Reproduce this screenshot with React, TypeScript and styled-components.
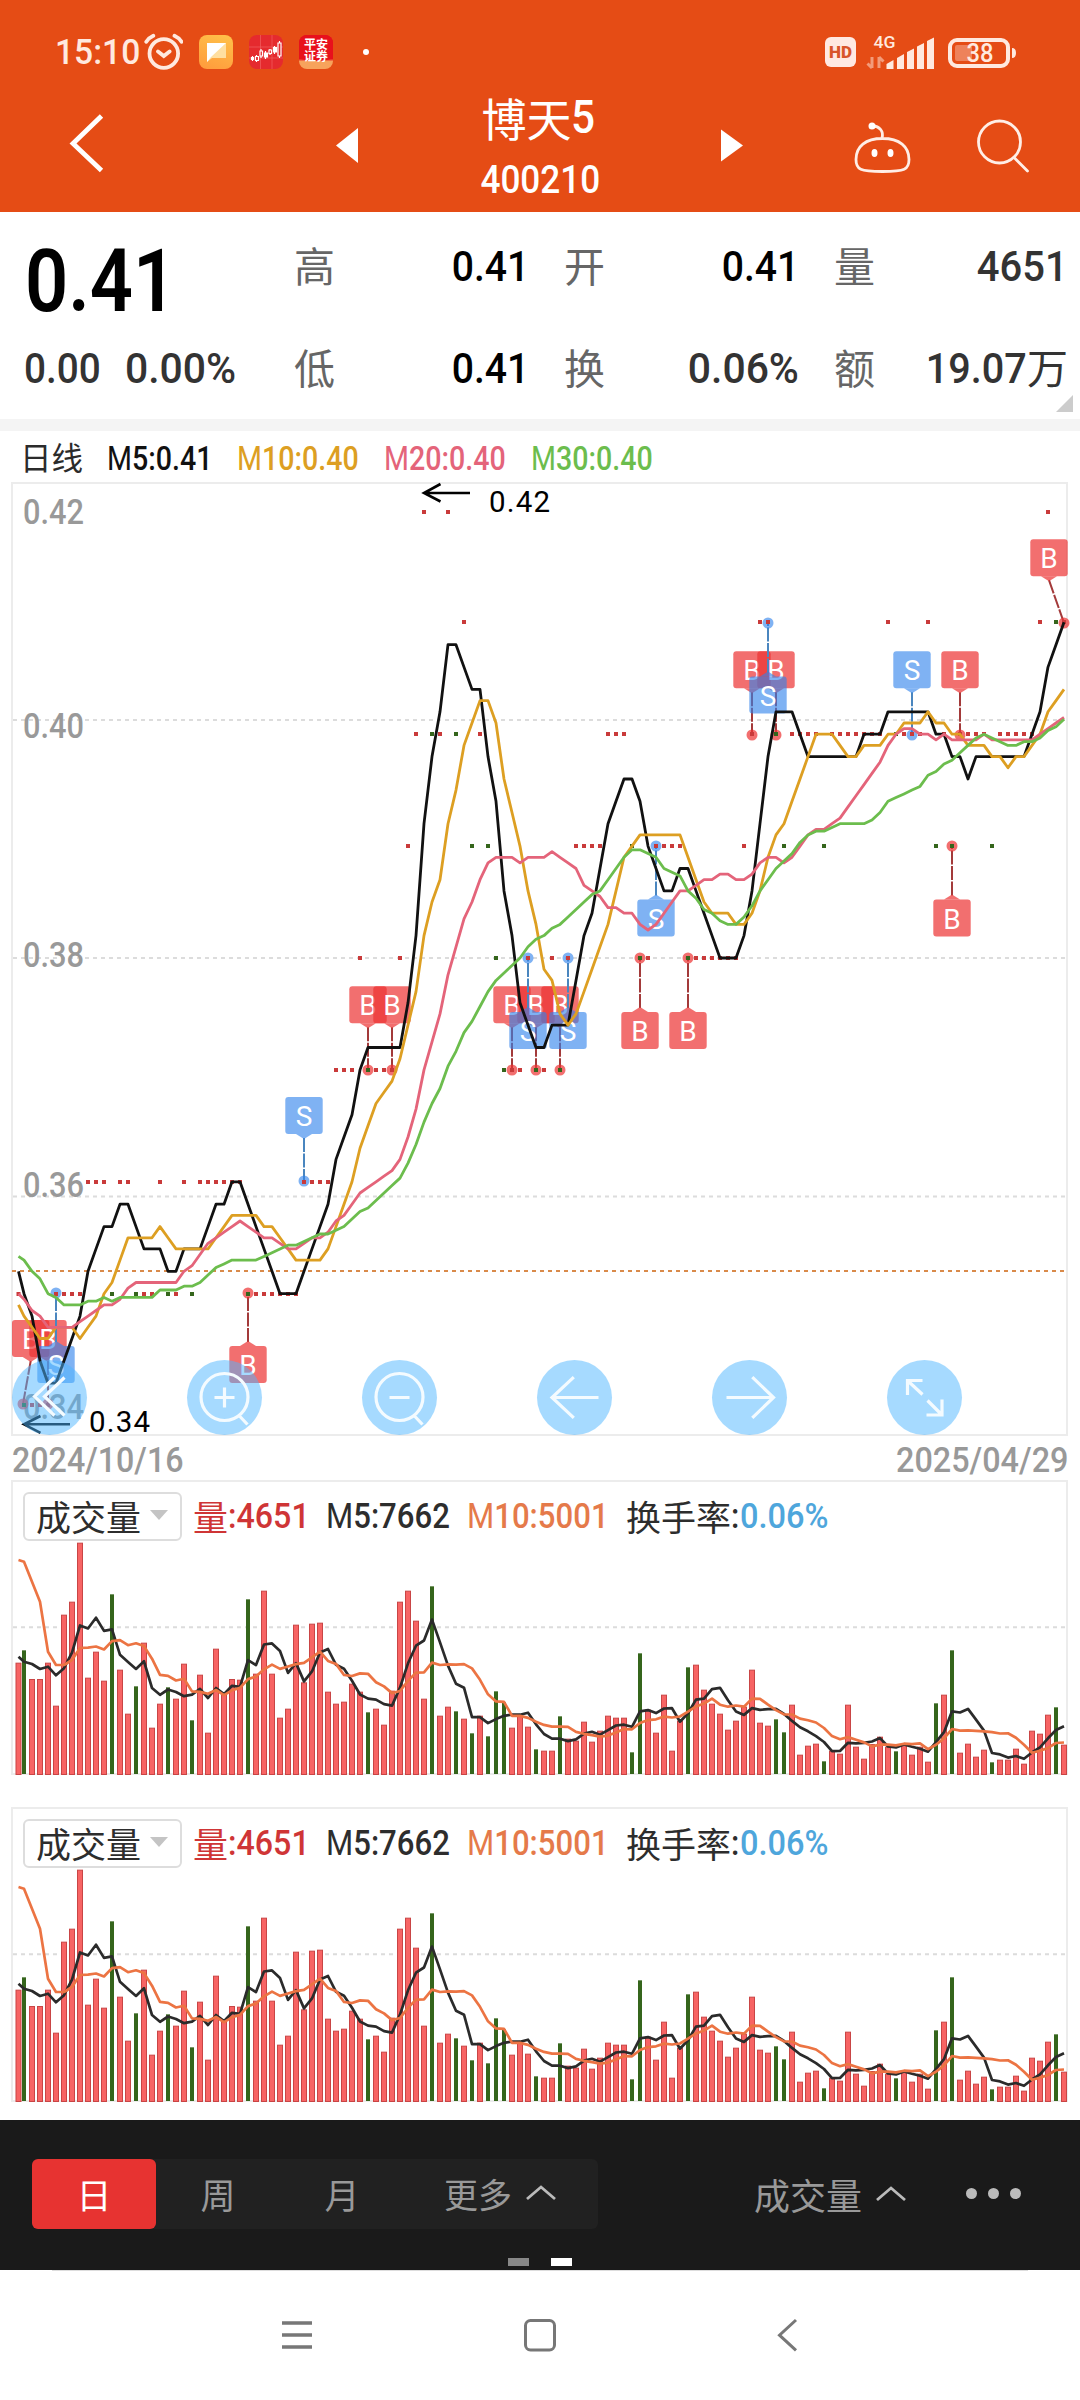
import React from 'react';
import styled, { createGlobalStyle } from 'styled-components';

const GlobalStyle = createGlobalStyle`
  body { margin: 0; background: #fff; }
  * { box-sizing: border-box; }
`;

const CJK = `'Noto Sans CJK SC', sans-serif`;
const NUM = `Roboto, 'Noto Sans CJK SC', sans-serif`;

/* ---------- data ---------- */

// closes in ticks of 0.01 above 0.34; the last 132 are plotted
const HISTORY = [1, 3, 2, 4, 2, 3, 1, 1, 1, 2, 1, 2, 1, 2, 1, 1, 1, 0, 1, 1, 1, 1, 1, 0, 0, 1, 1, 2, 1];
const CLOSES = [
  1, 0, 0, 0, 0, 1, 1, 1, 1, 2, 2, 2, 1, 2, 2, 1, 1, 1, 2, 1, 1, 2, 1, 2, 2, 2, 2, 2, 2, 1,
  1, 1, 1, 1, 1, 1, 2, 2, 2, 2, 3, 3, 3, 4, 3, 3, 3, 3, 4, 5, 6, 8, 6, 6, 8, 6, 7, 5, 6, 5,
  4, 3, 3, 3, 4, 3, 3, 4, 3, 4, 5, 5, 5, 5, 6, 6, 6, 5, 4, 4, 5, 5, 5, 5, 4, 4, 4, 4, 4, 4,
  4, 5, 6, 7, 7, 6, 5, 6, 6, 6, 6, 5, 6, 6, 6, 6, 6, 6, 6, 7, 6, 6, 6, 6, 7, 5, 6, 5, 6, 6,
  6, 6, 5, 6, 6, 6, 6, 6, 7, 8, 7, 7,
];
const ROW_Y = [1405, 1294, 1182, 1070, 958, 846, 734, 622, 512];

// distance of each bar's top from the panel top, in thirds of a pixel
const BARS = [
  578, 541, 627, 627, 578, 707, 434, 395, 218, 623, 545, 632, 373, 599, 731, 649, 518, 773, 701, 652,
  686, 581, 751, 614, 788, 536, 672, 627, 629, 388, 611, 362, 611, 743, 716, 464, 637, 461, 458, 665,
  701, 695, 641, 665, 727, 716, 764, 662, 395, 362, 452, 686, 349, 737, 710, 724, 746, 790, 737, 799,
  664, 697, 773, 737, 770, 838, 842, 842, 739, 806, 812, 755, 815, 782, 737, 743, 743, 847, 550, 719,
  788, 674, 842, 752, 592, 584, 659, 701, 731, 779, 752, 710, 599, 758, 767, 748, 787, 704, 854, 827,
  821, 874, 842, 851, 704, 830, 866, 822, 800, 830, 844, 822, 854, 830, 875, 700, 674, 541, 848, 821,
  860, 839, 877, 869, 869, 836, 881, 782, 791, 734, 712, 824,
];
const FALLING = new Set([
  1, 12, 15, 19, 22, 29, 44, 52, 55, 57, 59, 60, 61, 65, 68, 77, 78, 84, 95, 96, 101, 110, 115, 117, 122, 130,
]);
const VOL_M5_LEAD = [560, 575, 582, 597];
const VOL_M10_LEAD = [270, 275, 335, 395, 545, 585, 585, 570, 534];

const barX = (i: number) => (i === 0 ? 18.5 : 16 + 8 * i);
const priceY = (n: number) => 1405.6 - 111.9 * n;
const volY = (v: number) => 1470 + v / 3;

const priceAverage = (span: number) => {
  const all = [...HISTORY, ...CLOSES];
  return CLOSES.map((_, i) => {
    const end = i + HISTORY.length + 1;
    const sum = all.slice(end - span, end).reduce((a, b) => a + b, 0);
    return `${barX(i)},${priceY(sum / span).toFixed(1)}`;
  }).join(' ');
};

const volumeAverage = (span: number, lead: number[]) =>
  BARS.map((_, i) => {
    const v = i < lead.length ? lead[i] : BARS.slice(i - span + 1, i + 1).reduce((a, b) => a + b, 0) / span;
    return `${barX(i)},${volY(v).toFixed(1)}`;
  }).join(' ');

type Mark = { t: 'B' | 'S'; x: number; y: number; ax: number; ay: number };
const mark = (t: 'B' | 'S', x: number, y: number, ay: number, ax = x): Mark => ({ t, x, y, ax, ay });
const MARKS: Mark[] = [
  mark('B', 30.7, 1338.5, 1404, 23),
  mark('B', 48, 1338.5, 1404),
  mark('S', 56, 1364.6, 1293),
  mark('B', 248, 1364.6, 1293),
  mark('S', 304, 1115.6, 1181),
  mark('B', 368, 1004.7, 1070),
  mark('B', 392, 1004.7, 1070),
  mark('B', 512, 1004.7, 1070),
  mark('B', 536, 1004.7, 1070),
  mark('B', 560, 1004.7, 1070),
  mark('S', 528, 1030.5, 958),
  mark('S', 568, 1030.5, 958),
  mark('S', 656, 918, 846),
  mark('B', 640, 1030.5, 958),
  mark('B', 688, 1030.5, 958),
  mark('B', 752, 669.7, 735),
  mark('B', 776, 669.7, 735),
  mark('S', 768, 695, 623),
  mark('S', 912, 669.7, 735),
  mark('B', 960, 669.7, 735),
  mark('B', 952, 918, 846),
  mark('B', 1049, 557.7, 623, 1064),
];

/* ---------- shared ---------- */

const Page = styled.div`
  width: 1080px;
  height: 2400px;
  display: flex;
  flex-direction: column;
  background: #fff;
  overflow: hidden;
  font-family: ${CJK};
  white-space: nowrap;
`;

const Num = styled.span<{ $size: number; $s?: number; $from?: string; $weight?: number; $color?: string }>`
  display: inline-block;
  font-family: ${NUM};
  font-size: ${(p) => p.$size}px;
  font-weight: ${(p) => p.$weight ?? 500};
  line-height: 1;
  color: ${(p) => p.$color ?? 'inherit'};
  transform: scaleX(${(p) => p.$s ?? 0.9});
  transform-origin: ${(p) => p.$from ?? 'left'} center;
`;

const Thin = styled.span`
  font-weight: 400;
`;

/* ---------- header ---------- */

const Header = styled.header`
  height: 212px;
  background: #e54c15;
  color: #fff;
`;

const StatusBar = styled.div`
  height: 84px;
  padding: 20px 60px 0 55px;
  display: flex;
  align-items: center;
  justify-content: space-between;
  color: #ffe9df;
`;

const StatusGroup = styled.div`
  display: flex;
  align-items: center;
`;

const Clock = styled.div`
  width: 88px;
`;

const AppIcon = styled.div<{ $bg: string }>`
  width: 34px;
  height: 34px;
  margin-left: 16px;
  border-radius: 8px;
  background: ${(p) => p.$bg};
  overflow: hidden;
`;

const SecuritiesText = styled.div`
  height: 26px;
  padding: 3px 4px 0;
  font-size: 12px;
  line-height: 11.5px;
  font-weight: 700;
  color: #fff;
  text-align: center;
  background: #e8101c;
  border-radius: 0 0 50% 50% / 0 0 4px 4px;
  white-space: normal;
`;

const NotificationDot = styled.div`
  width: 6px;
  height: 6px;
  margin-left: 30px;
  border-radius: 50%;
  background: #fff;
`;

const HdBadge = styled.div`
  width: 31px;
  height: 30px;
  border-radius: 6px;
  background: #ffe9e2;
  color: #d8552b;
  font: 900 17px/30px Roboto, sans-serif;
  text-align: center;
`;

const TitleBar = styled.div`
  height: 128px;
  padding-left: 60px;
  display: grid;
  grid-template-columns: 276px 22px 363px 22px 107px 65px 60px 60px;
`;

const TitleBlock = styled.div`
  display: flex;
  flex-direction: column;
  align-items: center;
`;

const StockName = styled.div`
  height: 66px;
  display: flex;
  align-items: center;
  font-size: 45px;
  font-weight: 400;
  line-height: 1;
`;

const StockCode = styled.div`
  height: 60px;
  padding-left: 1px;
  display: flex;
  align-items: center;
`;

function StatusIcons() {
  return (
    <svg width="164" height="64" viewBox="857 19 164 64">
      <g fill="#ffe9df">
        <text x="874.5" y="47.3" fontFamily="Roboto, sans-serif" fontSize="17" fontWeight="500" textLength="22" lengthAdjust="spacingAndGlyphs">4G</text>
        <path opacity=".5" d="M873 56v11M873 67l-4.5-4.5M880 67V56M880 56l4.5 4.5" stroke="#ffe9df" strokeWidth="3" fill="none" />
        <path d="M887.500 63l7-4v9h-7zM898 57l7-4v15h-7zM908 51l7-3.500v20.500h-7zM918 45.500l7-3.500v26h-7zM928 40l7-3.500v31.500h-7z" />
        <rect x="951" y="39" width="58" height="26" rx="7" fill="none" stroke="#ffe9df" strokeWidth="4" />
        <path d="M1013 47q4 0 4 5t-4 5z" />
        <rect x="956" y="44" width="17" height="16" rx="2" opacity=".35" />
        <text x="967.5" y="61" fontFamily="Roboto, sans-serif" fontSize="25" fontWeight="500" textLength="27" lengthAdjust="spacingAndGlyphs">38</text>
      </g>
    </svg>
  );
}

function TopHeader() {
  return (
    <Header>
      <StatusBar>
        <StatusGroup>
          <Clock><Num $size={35} $s={0.96}>15:10</Num></Clock>
          <svg width="40" height="40" viewBox="143.500 32 40 40" fill="none" stroke="#ffe9df" strokeWidth="3.800" strokeLinecap="round">
            <circle cx="164.300" cy="53.500" r="14.300" />
            <path d="M158.500 51.500l5.800 4.500 5.800-4.500M146.800 41.800q2.500-4 7-6M182 41.800q-2.500-4-7-6" />
          </svg>
          <AppIcon $bg="linear-gradient(20deg,#ff9a3c,#ffc24a)">
            <svg width="34" height="34" viewBox="0 0 34 34">
              <path d="M8 8h19v15H13l-5 4z" fill="#ffdfa0" />
              <path d="M8 8h19L12 22l-4 5z" fill="#fff" />
            </svg>
          </AppIcon>
          <AppIcon $bg="#e52a2e">
            <svg width="34" height="34" viewBox="0 0 34 34" stroke="#fff" strokeWidth="1.200" fill="none">
              <path d="M11.500 0v34M23 0v34M0 12h34M0 23h34" stroke="#f06060" strokeWidth=".7" />
              <path d="M3.500 21v5M7.500 20v7M12 14v9M16.500 16v8M21 14v6M25.500 11v8M30.500 6v17" />
              <path d="M2.500 22.500h2v2h-2zM15.500 18h3v4h-3zM24.500 12.500h3v4.500h-3z" fill="#fff" />
              <path d="M6.500 21.500h3v4h-3zM11 16h2.500v5H11zM20 15h2.500v3.500H20zM29 8h3v13h-3z" fill="#e52a2e" />
            </svg>
          </AppIcon>
          <AppIcon $bg="linear-gradient(#e8101c 70%,#f7a35c 78%)">
            <SecuritiesText>平安证券</SecuritiesText>
          </AppIcon>
          <NotificationDot />
        </StatusGroup>
        <StatusGroup>
          <HdBadge>HD</HdBadge>
          <StatusIcons />
        </StatusGroup>
      </StatusBar>
      <TitleBar>
        <svg width="276" height="128" viewBox="60 84 276 128" fill="none" stroke="#fff" strokeWidth="4.800">
          <path d="M101.500 116L73 143.500l28.500 27" />
        </svg>
        <svg width="22" height="128" viewBox="336 84 22 128"><path d="M358 128v35l-22-17.500z" fill="#fff" /></svg>
        <TitleBlock>
          <StockName>博天<Num $size={46} $s={0.92}>5</Num></StockName>
          <StockCode><Num $size={39.500} $s={0.89} $from="center">400210</Num></StockCode>
        </TitleBlock>
        <svg width="22" height="128" viewBox="721 84 22 128"><path d="M721 129.500v32l22-16z" fill="#fff" /></svg>
        <span />
        <svg width="65" height="128" viewBox="850 84 65 128" fill="none" stroke="#ffeee6" strokeWidth="2.800">
          <path d="M882.500 138.500c-17 0-26.500 8-26.500 21 0 10 4 12 26.500 12s26.500-2 26.500-12c0-13-9.500-21-26.500-21zM882 138c2-7-3-12-9-12" />
          <circle cx="872" cy="126" r="3.500" fill="#fff" stroke="none" />
          <ellipse cx="874.500" cy="153" rx="3" ry="4" fill="#fff" stroke="none" />
          <ellipse cx="890.500" cy="153" rx="3" ry="4" fill="#fff" stroke="none" />
        </svg>
        <span />
        <svg width="60" height="128" viewBox="975 84 60 128" fill="none" stroke="#ffeee6" strokeWidth="2.800">
          <circle cx="999.500" cy="142" r="21" />
          <path d="M1014 157.500l13.500 13.500" strokeLinecap="round" />
        </svg>
      </TitleBar>
    </Header>
  );
}

/* ---------- quote ---------- */

const Quote = styled.section`
  position: relative;
  height: 207px;
  padding-top: 3px;
  display: grid;
  grid-template-columns: 259px 235px 235px 234px;
  grid-template-rows: 102px 102px;
  column-gap: 35px;
`;

const BigPrice = styled.div`
  display: flex;
  align-items: center;
  padding: 31px 0 0 25px;
`;

const Change = styled.div`
  display: grid;
  grid-template-columns: 101px 1fr;
  align-items: center;
  padding-left: 24px;
  color: #333;
`;

const Stat = styled.div<{ $color?: string }>`
  display: flex;
  align-items: center;
  justify-content: space-between;
  color: ${(p) => p.$color ?? '#000'};
`;

const StatLabel = styled.span`
  padding-bottom: 3px;
  font-size: 41px;
  line-height: 1;
  font-weight: 400;
  color: #666;
`;

const Unit = styled.span`
  padding-bottom: 3px;
  font-size: 41px;
  line-height: 1;
  font-weight: 400;
`;

const StatValue = styled.span`
  display: flex;
  align-items: center;
`;

const Corner = styled.i`
  position: absolute;
  right: 7px;
  bottom: 7px;
  border-style: solid;
  border-width: 0 0 17px 17px;
  border-color: transparent transparent #ccc transparent;
`;

const Band = styled.div`
  height: 12px;
  background: #f4f4f4;
`;

const Figure = (p: { children: string; s?: number; from?: string }) => (
  <Num $size={43} $s={p.s ?? 0.91} $from={p.from ?? 'right'}>{p.children}</Num>
);

function QuoteBoard() {
  return (
    <Quote>
      <BigPrice><Num $size={87} $s={0.87} $weight={600} $color="#000">0.41</Num></BigPrice>
      <Stat><StatLabel>高</StatLabel><Figure>0.41</Figure></Stat>
      <Stat><StatLabel>开</StatLabel><Figure>0.41</Figure></Stat>
      <Stat $color="#333"><StatLabel>量</StatLabel><Figure s={0.93}>4651</Figure></Stat>
      <Change><Figure s={0.9} from="left">0.00</Figure><Figure s={0.95} from="left">0.00%</Figure></Change>
      <Stat><StatLabel>低</StatLabel><Figure>0.41</Figure></Stat>
      <Stat $color="#333"><StatLabel>换</StatLabel><Figure s={0.95}>0.06%</Figure></Stat>
      <Stat $color="#333">
        <StatLabel>额</StatLabel>
        <StatValue><Figure s={0.92}>19.07</Figure><Unit>万</Unit></StatValue>
      </Stat>
      <Corner />
    </Quote>
  );
}

/* ---------- price chart ---------- */

const Legend = styled.div`
  height: 51px;
  padding: 5px 0 0 20px;
  display: grid;
  grid-template-columns: 87px 130px 147px 147px 1fr;
  align-items: center;
  font-size: 31.5px;
  line-height: 1;
  font-weight: 400;
  color: #2b2b2b;
`;

const PeriodName = styled.span`
  padding-bottom: 4px;
`;

const PriceFrame = styled.section`
  position: relative;
  width: 1057px;
  height: 954px;
  margin-left: 11px;
  border: 2px solid #ececec;
  & > svg { display: block; overflow: visible; }
`;

const Tools = styled.div`
  position: absolute;
  left: -1px;
  bottom: -1px;
  display: flex;
  gap: 100px;
`;

const Tool = styled.button`
  width: 75px;
  height: 75px;
  padding: 0;
  border: 0;
  border-radius: 50%;
  background: rgba(77, 182, 255, 0.5);
  svg { display: block; }
`;

const TOOL_PATHS = [
  'M5-20L-15-1L5 18M15-20L-5-1L15 18',
  'M-10 0H10M0-10V10M14.500 18L23 27',
  'M-10 0H10M14.500 18L23 27',
  'M24 0H-22M-.7-20.300L-22.500 0L-.7 20.300',
  'M-23 0H23M2.800-20.300L24 0L2.800 20.300',
  'M-2-17H-17V-2.500M-17-17L-2-3M2 17.500H17.500V2M17.500 17.500L3 3',
];

const Dates = styled.div`
  height: 44px;
  padding: 4px 12px 0 12px;
  display: flex;
  align-items: center;
  justify-content: space-between;
  color: #999;
`;

const AXIS: [string, number][] = [['0.42', 524], ['0.40', 738], ['0.38', 966.5], ['0.36', 1197], ['0.34', 1419]];

function Flag({ m }: { m: Mark }) {
  const fill = m.t === 'B' ? 'rgba(236,50,50,.7)' : 'rgba(48,130,235,.62)';
  const line = m.t === 'B' ? '#a33a3a' : '#4a86bf';
  const dir = m.ay > m.y ? 1 : -1;
  const edge = m.y + dir * 18.5;
  return (
    <g>
      <line x1={m.x} y1={edge + dir * 4} x2={m.ax} y2={m.ay} stroke={line} strokeWidth="2" strokeDasharray="14 1.500" />
      <circle cx={m.ax} cy={m.ay} r="5.500" fill={fill} />
      <path d={`M${m.x - 8} ${edge}h16l-8 ${dir * 5}z`} fill={fill} />
      <rect x={m.x - 18.7} y={m.y - 18.5} width="37.400" height="37" rx="3" fill={fill} />
      <text x={m.x} y={m.y + 10.5} fill="#fff" fontFamily="Roboto, sans-serif" fontSize="28" textAnchor="middle">{m.t}</text>
    </g>
  );
}

function PriceChart() {
  return (
    <PriceFrame>
      <svg width="1053" height="950" viewBox="13 484 1053 950">
        {[720, 958, 1196.5].map((y) => (
          <line key={y} x1="13" x2="1066" y1={y} y2={y} stroke="#dcdcdc" strokeWidth="2" strokeDasharray="4 4" />
        ))}
        <line x1="12" x2="1066" y1="1271" y2="1271" stroke="#d98a4a" strokeWidth="2" strokeDasharray="4 4" />
        {AXIS.map(([t, y]) => (
          <text key={t} x="23" y={y} fill="#999" fontFamily="Roboto, sans-serif" fontSize="35" fontWeight="500" textLength="61" lengthAdjust="spacingAndGlyphs">{t}</text>
        ))}
        {MARKS.map((m) => <Flag key={`${m.t}${m.ax}`} m={m} />)}
        {CLOSES.map((c, i) => (
          <rect key={i} x={barX(i) - 2} y={ROW_Y[c] - 2} width="4" height="4" fill={FALLING.has(i) ? '#35651c' : '#c93a3a'} />
        ))}
        <g fill="none" strokeWidth="2.800" strokeLinejoin="round">
          <polyline points={priceAverage(5)} stroke="#111" />
          <polyline points={priceAverage(10)} stroke="#dd9f22" />
          <polyline points={priceAverage(20)} stroke="#e4647a" />
          <polyline points={priceAverage(30)} stroke="#6cbd4d" />
        </g>
        <g stroke="#000" strokeWidth="2.600" fill="none">
          <path d="M470 493H424M440.500 484L424 493l16.500 8.500" />
          <path d="M70 1424.300H24M40.500 1416L24 1424.300l16.500 8.500" />
        </g>
        <g fill="#000" fontFamily="Roboto, sans-serif" fontSize="29.500">
          <text x="489" y="512" textLength="61">0.42</text>
          <text x="89" y="1432" textLength="61">0.34</text>
        </g>
      </svg>
      <Tools>
        {TOOL_PATHS.map((d, i) => (
          <Tool key={d}>
            <svg width="75" height="75" viewBox="-37.500 -37.500 75 75" fill="none" stroke="#f4fbff" strokeWidth="3.200">
              {(i === 1 || i === 2) && <circle r="23.500" cy="-.5" />}
              <path d={d} />
            </svg>
          </Tool>
        ))}
      </Tools>
    </PriceFrame>
  );
}

/* ---------- volume ---------- */

const VolumePanel = styled.section`
  width: 1057px;
  height: 295px;
  margin: 0 0 32px 11px;
  border: 2px solid #ececec;
  svg { display: block; overflow: visible; }
`;

const VolumeHead = styled.div`
  height: 60px;
  padding: 10px 0 0 10px;
  display: grid;
  grid-template-columns: 170px 133px 141px 159px 1fr;
  color: #2d2d2d;
  font-size: 35px;
  font-weight: 400;
  line-height: 46px;
`;

const Picker = styled.button`
  width: 159px;
  height: 49px;
  padding: 0 0 3px 11px;
  display: flex;
  align-items: center;
  gap: 9px;
  border: 2px solid #ddd;
  border-radius: 6px;
  background: #fff;
  color: #2d2d2d;
  font: 400 35px/43px ${CJK};
`;

const Caret = styled.i`
  border-style: solid;
  border-width: 10px 9px 0 9px;
  border-color: #c4c4c4 transparent transparent transparent;
`;

const Reading = styled.div<{ $color?: string }>`
  display: flex;
  align-items: center;
  height: 47px;
  color: ${(p) => p.$color ?? 'inherit'};
`;

const Figures = styled(Num)`
  padding-top: 2px;
`;

function Volume() {
  return (
    <VolumePanel>
      <VolumeHead>
        <Picker>成交量<Caret /></Picker>
        <Reading $color="#cf3536">量<Figures $size={35} $s={0.92}>:4651</Figures></Reading>
        <Reading><Figures $size={35} $s={0.89}><Thin>M</Thin>5:7662</Figures></Reading>
        <Reading $color="#e57a4a"><Figures $size={35} $s={0.89}><Thin>M</Thin>10:5001</Figures></Reading>
        <Reading>换手率<Figures $size={35}>:</Figures><Figures $size={35} $s={0.93} $color="#4ea6dc">0.06%</Figures></Reading>
      </VolumeHead>
      <svg width="1053" height="232" viewBox="13 1542 1053 232">
        <line x1="13" x2="1066" y1="1627.300" y2="1627.300" stroke="#dcdcdc" strokeWidth="2" strokeDasharray="4 4" />
        {BARS.map((v, i) =>
          FALLING.has(i) ? (
            <rect key={i} x={barX(i) - 2} y={volY(v)} width="4" height={1774 - volY(v)} fill="#35651c" />
          ) : (
            <rect key={i} x={barX(i) - 2.5} y={volY(v) + 0.5} width="5" height={1774 - volY(v)} fill="#f76464" stroke="#c94545" />
          ),
        )}
        <g fill="none" strokeWidth="2.700" strokeLinejoin="round">
          <polyline points={volumeAverage(5, VOL_M5_LEAD)} stroke="#2b2b2b" />
          <polyline points={volumeAverage(10, VOL_M10_LEAD)} stroke="#ec7443" />
        </g>
      </svg>
    </VolumePanel>
  );
}

/* ---------- bottom ---------- */

const PeriodBar = styled.nav`
  position: relative;
  height: 150px;
  margin-top: -14px;
  padding: 39px 59px 0 32px;
  display: flex;
  justify-content: space-between;
  background: #1a1a1a;
  color: #999;
  font-size: 35px;
  font-weight: 400;
`;

const Periods = styled.div`
  width: 566px;
  height: 70px;
  display: grid;
  grid-template-columns: 124px 124px 124px 1fr;
  border-radius: 6px;
  background: #212121;
`;

const Period = styled.div<{ $active?: boolean }>`
  display: flex;
  align-items: center;
  justify-content: center;
  gap: 13px;
  padding-bottom: 2px;
  border-radius: 6px;
  background: ${(p) => (p.$active ? '#e73331' : 'transparent')};
  color: ${(p) => (p.$active ? '#fff' : '#999')};
`;

const More = styled(Period)`
  justify-content: flex-start;
  padding-left: 40px;
  font-size: 34px;
`;

const IndicatorMenu = styled.div`
  height: 69px;
  display: flex;
  align-items: center;
  gap: 13px;
  font-size: 36px;
`;

const Dots = styled.div`
  display: flex;
  gap: 11px;
  margin-left: 46px;
  i { width: 11px; height: 11px; border-radius: 50%; background: #bbb; }
`;

const Pager = styled.div`
  position: absolute;
  left: 508px;
  bottom: 4px;
  display: flex;
  gap: 22px;
`;

const PageMark = styled.i<{ $on?: boolean }>`
  width: 21px;
  height: 8px;
  background: ${(p) => (p.$on ? '#fff' : '#888')};
`;

const SystemNav = styled.div`
  flex: 1;
  display: flex;
  justify-content: center;
  gap: 199px;
  padding-top: 44px;
  margin: 0 52px;
  border-top: 1px solid #ddd;
`;

const Up = () => (
  <svg width="32" height="18" viewBox="0 0 32 18" fill="none" stroke="#bbb" strokeWidth="2.800">
    <path d="M2 15L16 3l14 12" />
  </svg>
);

export default function App() {
  return (
    <Page>
      <GlobalStyle />
      <TopHeader />
      <QuoteBoard />
      <Band />
      <Legend>
        <PeriodName>日线</PeriodName>
        <Num $size={32.500} $s={0.88} $color="#111"><Thin>M</Thin>5:0.41</Num>
        <Num $size={32.500} $s={0.88} $color="#dd9f22"><Thin>M</Thin>10:0.40</Num>
        <Num $size={32.500} $s={0.88} $color="#e4647a"><Thin>M</Thin>20:0.40</Num>
        <Num $size={32.500} $s={0.88} $color="#6cbd4d"><Thin>M</Thin>30:0.40</Num>
      </Legend>
      <PriceChart />
      <Dates>
        <Num $size={35} $s={0.92}>2024/10/16</Num>
        <Num $size={35} $s={0.925} $from="right">2025/04/29</Num>
      </Dates>
      <Volume />
      <Volume />
      <PeriodBar>
        <Periods>
          <Period $active>日</Period>
          <Period>周</Period>
          <Period>月</Period>
          <More>更多<Up /></More>
        </Periods>
        <IndicatorMenu>
          成交量<Up />
          <Dots><i /><i /><i /></Dots>
        </IndicatorMenu>
        <Pager><PageMark /><PageMark $on /></Pager>
      </PeriodBar>
      <SystemNav>
        <svg width="50" height="40" viewBox="271 2315 50 40" stroke="#777" strokeWidth="3.500">
          <path d="M282 2323h30M282 2335h30M282 2347h30" />
        </svg>
        <svg width="40" height="40" viewBox="520 2315 40 40" fill="none" stroke="#777" strokeWidth="3">
          <rect x="525.500" y="2320.500" width="29" height="29.500" rx="5" />
        </svg>
        <svg width="50" height="40" viewBox="759 2315 50 40" fill="none" stroke="#777" strokeWidth="3">
          <path d="M796 2320l-16.500 15.200 16.500 15.200" />
        </svg>
      </SystemNav>
    </Page>
  );
}
